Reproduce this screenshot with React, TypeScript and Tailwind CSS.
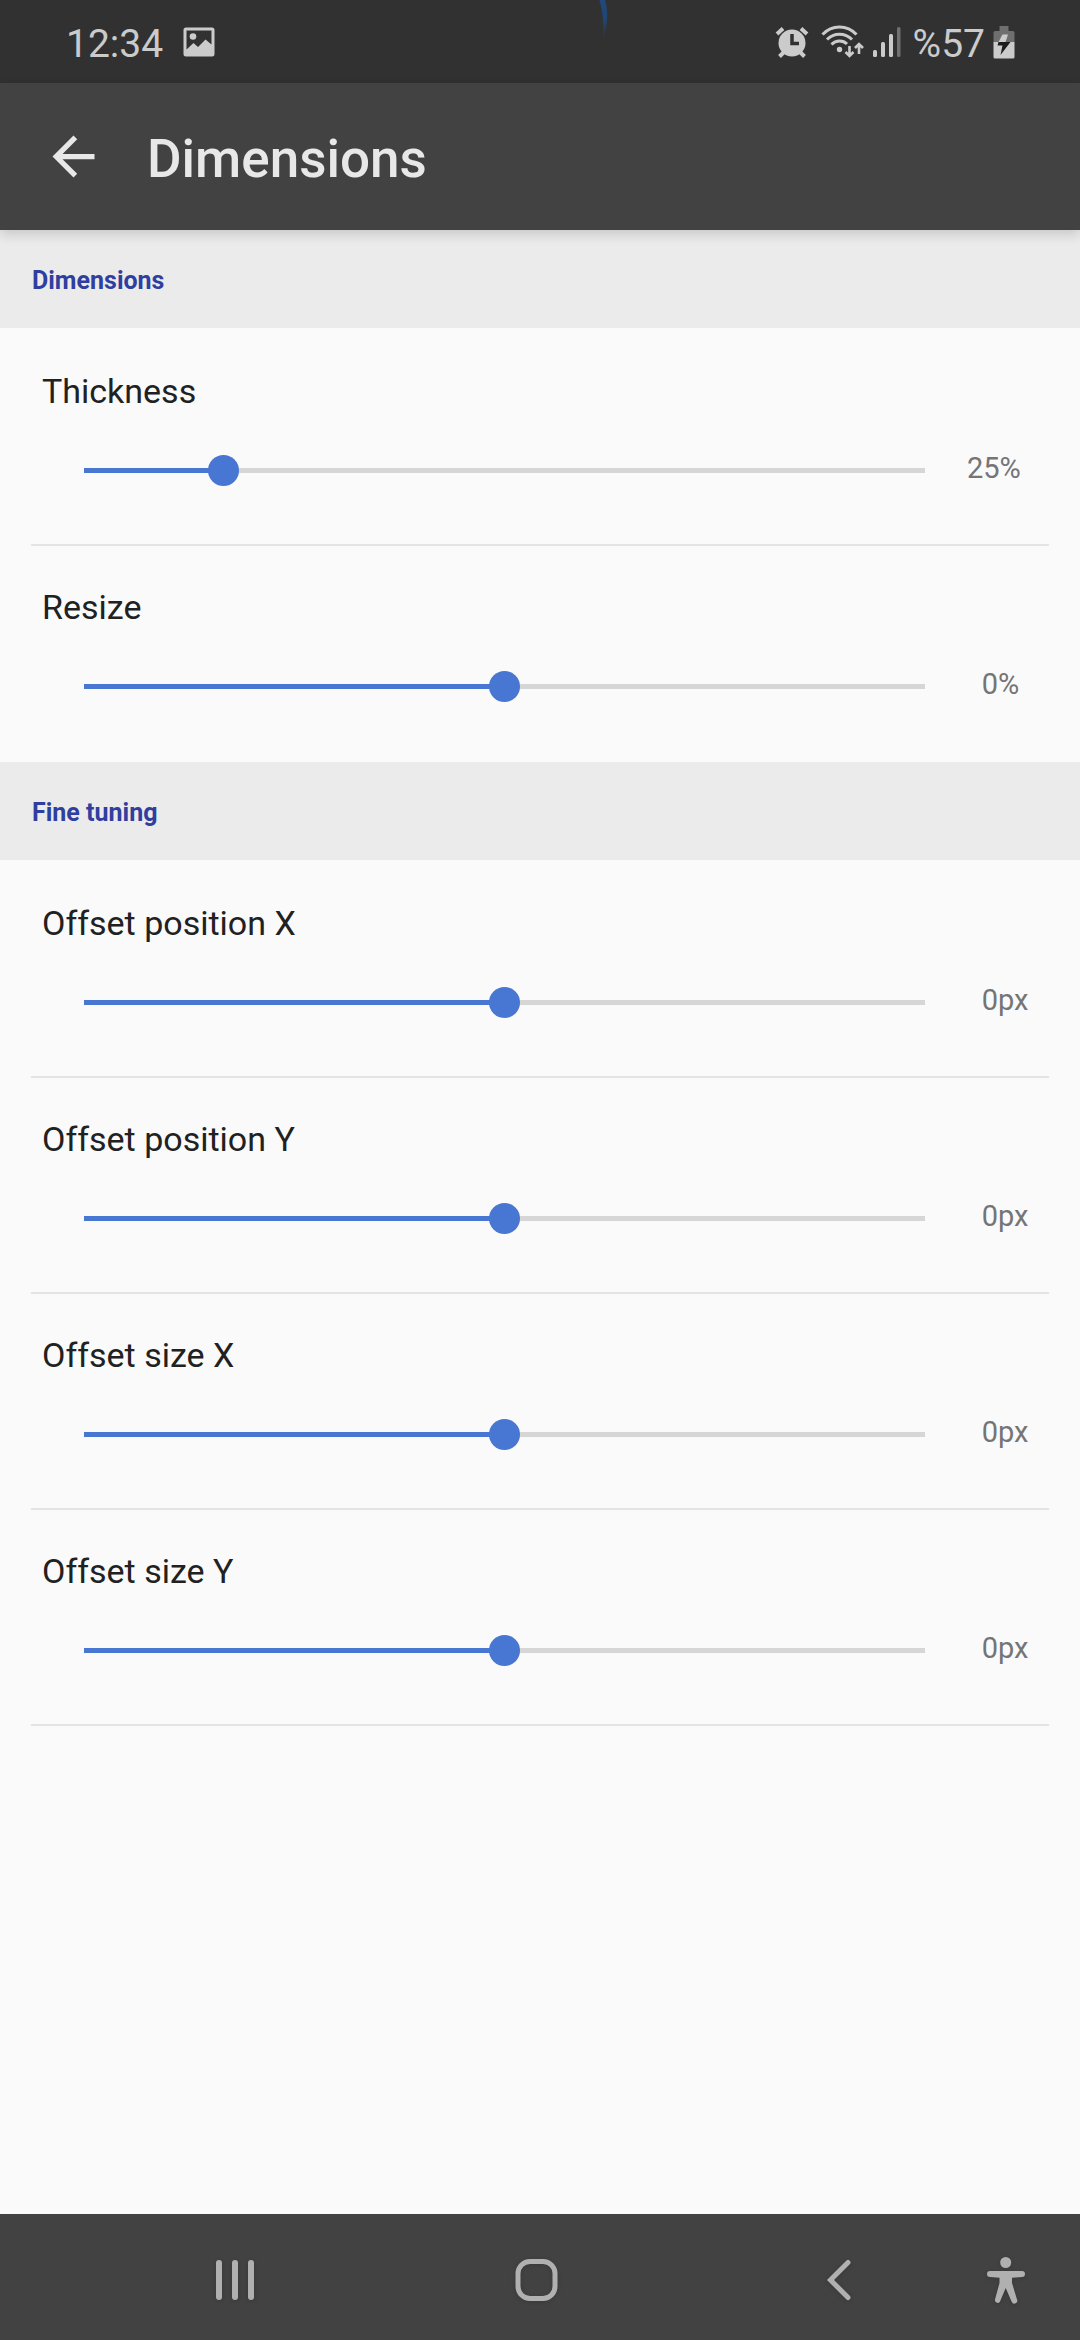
import { useState } from 'react';

interface SliderSetting {
  id: string;
  label: string;
  min: number;
  max: number;
  initial: number;
  unit: string;
}

interface SettingRowProps {
  setting: SliderSetting;
  divider: boolean;
}

interface SectionProps {
  title: string;
  settings: SliderSetting[];
  lastDivider?: boolean;
}

const dimensions: SliderSetting[] = [
  { id: 'thickness', label: 'Thickness', min: 10, max: 100, initial: 25, unit: '%' },
  { id: 'resize', label: 'Resize', min: -50, max: 50, initial: 0, unit: '%' },
];

const fineTuning: SliderSetting[] = [
  { id: 'position-x', label: 'Offset position X', min: -50, max: 50, initial: 0, unit: 'px' },
  { id: 'position-y', label: 'Offset position Y', min: -50, max: 50, initial: 0, unit: 'px' },
  { id: 'size-x', label: 'Offset size X', min: -50, max: 50, initial: 0, unit: 'px' },
  { id: 'size-y', label: 'Offset size Y', min: -50, max: 50, initial: 0, unit: 'px' },
];

const StatusBar = () => {
  return (
    <div className="relative flex h-[83px] items-center justify-between bg-[#313131] pl-[66px] pr-[65px] text-[#cbcbcb]">
      {/* Tip of the ring around the camera cutout */}
      <svg className="absolute left-[596px] top-0 h-10 w-4" viewBox="0 0 16 40" fill="none" aria-hidden="true">
        <defs>
          <linearGradient id="ring" x1="0" y1="0" x2="0" y2="1">
            <stop offset="0" stopColor="#20497f" />
            <stop offset="0.5" stopColor="#20456f" />
            <stop offset="1" stopColor="#313131" />
          </linearGradient>
        </defs>
        <path d="M3.5 0H9C11.5 9 12 18 10 28L7.5 40H7C8 27 7 12 3.5 0Z" fill="url(#ring)" />
      </svg>

      <div className="flex items-center gap-5">
        <span className="pt-1 text-[39px] leading-[44px]">12:34</span>
        <svg className="h-[30px] w-8" viewBox="0 0 32 30" fill="currentColor" aria-hidden="true">
          <path
            fillRule="evenodd"
            d="M3 0.5H29A2.5 2.5 0 0 1 31.5 3V27A2.5 2.5 0 0 1 29 29.5H3A2.5 2.5 0 0 1 0.5 27V3A2.5 2.5 0 0 1 3 0.5ZM3.5 3.5V22.5L10.5 16L15 20L22.5 12.5L28.5 17.5V3.5Z"
          />
          <circle cx="10" cy="9.5" r="3.3" />
        </svg>
      </div>

      <div className="flex items-center">
        <svg className="h-8 w-[34px]" viewBox="0 0 34 32" fill="none" aria-hidden="true">
          <circle cx="17" cy="17" r="13.5" fill="currentColor" />
          <path d="M2 8L8 2.5M32 8L26 2.5M4.500 30.500L9 26M29.500 30.500L25 26" stroke="currentColor" strokeWidth="4" />
          <path d="M17 8V17.500H24" stroke="#313131" strokeWidth="3.500" />
        </svg>
        <svg className="ml-3 h-[34px] w-[44px]" viewBox="0 0 44 34" fill="none" stroke="currentColor" aria-hidden="true">
          <path d="M1.500 9.500C11 -0.500 26 -0.500 35.500 9.500" strokeWidth="3" />
          <path d="M6 14.500C13 7.500 24 7.500 31 14.500" strokeWidth="3" />
          <path d="M10.500 19.500C15 15 22 15 26 19" strokeWidth="3" />
          <circle cx="18.500" cy="24.500" r="2.700" fill="currentColor" stroke="none" />
          <path d="M28.500 21V31M24.500 27L28.500 31L32.500 27" strokeWidth="2.600" />
          <path d="M38 29V19M34 23L38 19L42 23" strokeWidth="2.600" />
        </svg>
        <svg className="ml-2 h-8 w-7" viewBox="0 0 28 32" fill="currentColor" aria-hidden="true">
          <rect x="0" y="24" width="4" height="7" rx="1.500" />
          <rect x="8" y="16" width="4" height="15" rx="1.500" />
          <rect x="16" y="8" width="4" height="23" rx="1.500" />
          <rect x="24" y="1" width="3.500" height="30" rx="1.500" fill="#707070" />
        </svg>
        <span className="ml-3 pt-1 text-[39px] leading-[44px]">%57</span>
        <svg className="ml-2 h-[34px] w-[22px]" viewBox="0 0 22 34" aria-hidden="true">
          <path d="M6.500 1H15.500V6H20Q21.500 6 21.500 7.500V17H0.500V7.500Q0.500 6 2 6H6.500Z" fill="#6f6f6f" />
          <path d="M0.500 17H21.500V32Q21.500 33.500 20 33.500H2Q0.500 33.500 0.500 32Z" fill="currentColor" />
          <path d="M9.500 9.500H15L12.500 17H5.500Z" fill="currentColor" />
          <path d="M5.500 17H17.500L7.500 30L9.500 20.500H4.500Z" fill="#1c1c1c" />
        </svg>
      </div>
    </div>
  );
};

const AppBar = () => {
  return (
    <header className="relative z-10 flex h-[147px] items-center gap-[42px] bg-[#424242] px-[42px] text-[#e8e8e8] shadow-[0_4px_12px_rgba(0,0,0,0.16)]">
      <button type="button" aria-label="Back">
        <svg className="h-[63px] w-[63px]" viewBox="0 0 24 24" fill="currentColor" aria-hidden="true">
          <path d="M20 11H7.830l5.590-5.590L12 4l-8 8 8 8 1.410-1.410L7.830 13H20v-2z" />
        </svg>
      </button>
      <h1 className="pt-1 text-[53px] font-medium leading-[64px]">Dimensions</h1>
    </header>
  );
};

const SettingRow = ({ setting, divider }: SettingRowProps) => {
  const [value, setValue] = useState(setting.initial);
  const percent = ((value - setting.min) / (setting.max - setting.min)) * 100;

  return (
    <div className={`mx-[31px] h-[216px] border-b-2 pl-[11px] pt-[41px] ${divider ? 'border-[#e4e4e4]' : 'border-transparent'}`}>
      <label htmlFor={setting.id} className="block text-[34px] leading-[40px] text-[#212121]">
        {setting.label}
      </label>
      <div className="mt-[44px] flex items-start pl-[26px]">
        <div className="relative h-8 flex-1">
          <div className="absolute inset-x-4 top-[13px] h-[5px] bg-[#d6d6d6]">
            <div className="h-full bg-[#4876d3]" style={{ width: `${percent}%` }} />
          </div>
          <input
            id={setting.id}
            type="range"
            min={setting.min}
            max={setting.max}
            value={value}
            onChange={(e) => setValue(Number(e.target.value))}
            className="absolute inset-x-0 top-0 h-[31px] w-full cursor-pointer appearance-none bg-transparent [&::-webkit-slider-thumb]:h-[31px] [&::-webkit-slider-thumb]:w-[31px] [&::-webkit-slider-thumb]:appearance-none [&::-webkit-slider-thumb]:rounded-full [&::-webkit-slider-thumb]:bg-[#4876d3]"
          />
        </div>
        <output htmlFor={setting.id} className="ml-[26px] flex w-[82px] text-[29px] leading-[26px] text-[#757575]">
          <span className="min-w-[31px] text-right">{value}</span>
          <span>{setting.unit}</span>
        </output>
      </div>
    </div>
  );
};

const Section = ({ title, settings, lastDivider = false }: SectionProps) => {
  return (
    <section>
      <h2 className="flex h-[98px] items-center bg-[#ebebeb] px-8 pt-1 text-[25px] font-bold leading-[32px] text-[#303f9f]">
        {title}
      </h2>
      <div className="pt-[2px]">
        {settings.map((setting, index) => (
          <SettingRow key={setting.id} setting={setting} divider={lastDivider || index < settings.length - 1} />
        ))}
      </div>
    </section>
  );
};

const NavigationBar = () => {
  return (
    <nav className="flex h-[126px] items-center bg-[#424242] pl-[84px] pr-[55px] text-[#b0b0b0]">
      <button type="button" aria-label="Recent apps" className="flex flex-1 justify-center">
        <svg className="h-12 w-12 drop-shadow-sm" viewBox="0 0 48 48" fill="currentColor" aria-hidden="true">
          <rect x="5" y="7" width="6" height="40" rx="3" />
          <rect x="21" y="7" width="6" height="40" rx="3" />
          <rect x="37" y="7" width="6" height="40" rx="3" />
        </svg>
      </button>
      <button type="button" aria-label="Home" className="flex flex-1 justify-center">
        <svg className="h-12 w-12 drop-shadow-sm" viewBox="0 0 48 48" fill="none" stroke="currentColor" aria-hidden="true">
          <rect x="6" y="8.500" width="37" height="37" rx="12" strokeWidth="5" />
        </svg>
      </button>
      <button type="button" aria-label="Back" className="flex flex-1 justify-center">
        <svg className="h-12 w-12 drop-shadow-sm" viewBox="0 0 48 48" fill="none" stroke="currentColor" aria-hidden="true">
          <path d="M35 9.500L17.500 27L35 44.500" strokeWidth="5" strokeLinecap="round" />
        </svg>
      </button>
      <button type="button" aria-label="Accessibility">
        <svg className="h-12 w-[38px] overflow-visible drop-shadow-sm" viewBox="0 0 38 48" fill="currentColor" aria-hidden="true">
          <circle cx="18.700" cy="9.500" r="5.500" />
          <path d="M3 18H35A3 3 0 0 1 35 24L25 24.800V30L30 46.500A2.800 2.800 0 0 1 24.800 49L18.700 35L12.800 49A2.800 2.800 0 0 1 8 46.500L12.500 30V24.800L3 24A3 3 0 0 1 3 18Z" />
        </svg>
      </button>
    </nav>
  );
};

export default function App() {
  return (
    <div className="flex min-h-screen flex-col bg-[#fafafa] font-['Roboto',sans-serif]">
      <StatusBar />
      <AppBar />
      <main className="flex-1">
        <Section title="Dimensions" settings={dimensions} />
        <Section title="Fine tuning" settings={fineTuning} lastDivider />
      </main>
      <NavigationBar />
    </div>
  );
}
